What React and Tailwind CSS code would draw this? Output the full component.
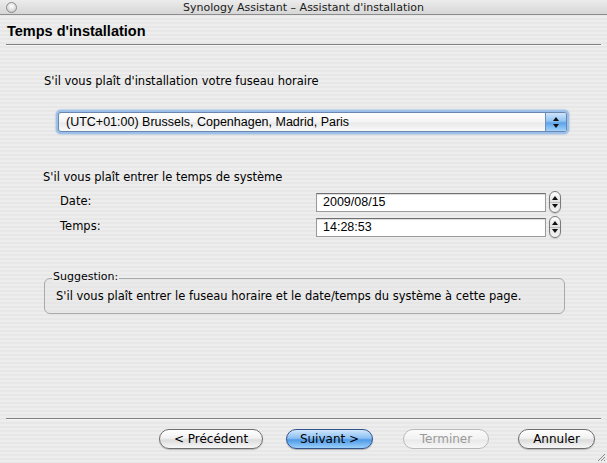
import React from "react";

const lucida = "font-['DejaVu_Sans','Noto_Sans',sans-serif]";
const helv = "font-['Liberation_Sans','Arial',sans-serif]";

function Stepper() {
  return (
    <div className="w-[12px] h-[22px] rounded-[6px] border border-[#7a7a7a] bg-[linear-gradient(to_bottom,#ffffff,#e2e2e2_50%,#f4f4f4)] flex flex-col items-center justify-between py-[4px] shadow-[0_1px_1px_rgba(0,0,0,0.15)]">
      <svg width="6" height="4" viewBox="0 0 6 4">
        <path d="M3 0 L6 4 L0 4 Z" fill="#111" />
      </svg>
      <div className="w-full h-px bg-[#bdbdbd]" />
      <svg width="6" height="4" viewBox="0 0 6 4">
        <path d="M0 0 L6 0 L3 4 Z" fill="#111" />
      </svg>
    </div>
  );
}

function Field({ label, value }) {
  return (
    <div className="flex items-center h-[22px]">
      <div className={`${lucida} text-[11.5px] text-black w-[273px] pl-[17px]`}>{label}</div>
      <div className={`${helv} w-[230px] h-[19px] bg-white border border-[#9a9a9a] border-t-[#6f6f6f] shadow-[inset_0_1px_1px_rgba(0,0,0,0.15)] text-[12.5px] leading-[17px] pl-[6px] text-black`}>
        {value}
      </div>
      <div className="ml-[3px]">
        <Stepper />
      </div>
    </div>
  );
}

function AquaButton({ children, width, variant = "normal" }) {
  const base = `${lucida} h-[20px] rounded-full text-[12px] leading-[18px] flex items-center justify-center`;
  const styles = {
    normal:
      "border border-[#6d6d6d] bg-[linear-gradient(to_bottom,#ffffff,#f1f1f1_45%,#dcdcdc_55%,#f7f7f7)] text-black shadow-[0_1px_1px_rgba(0,0,0,0.2)]",
    primary:
      "border border-[#33548a] bg-[linear-gradient(to_bottom,#cfe6fc,#8cc0f2_45%,#4f9ae6_55%,#9ad0fb)] text-black shadow-[0_1px_1px_rgba(0,0,0,0.25)]",
    disabled:
      "border border-[#b9b9b9] bg-[linear-gradient(to_bottom,#fbfbfb,#f2f2f2_50%,#e9e9e9_55%,#f7f7f7)] text-[#9a9a9a]",
  };
  return (
    <div className={`${base} ${styles[variant]}`} style={{ width }}>
      {children}
    </div>
  );
}

export default function App() {
  return (
    <div className="w-[607px] h-[463px] overflow-hidden flex flex-col bg-[repeating-linear-gradient(to_bottom,#ededed_0px,#ededed_2px,#e7e7e7_2px,#e7e7e7_4px)] text-black">
      {/* title bar */}
      <div className="h-[15px] relative flex items-center justify-center border-b border-[#8c8c8c] bg-[linear-gradient(to_bottom,#ececec,#d6d6d6)]">
        <div className="absolute left-[6px] top-[2px] w-[11px] h-[11px] rounded-full border border-[#8a8a8a] bg-[radial-gradient(circle_at_50%_35%,#ffffff,#d4d4d4_70%,#bcbcbc)]" />
        <div className={`${lucida} text-[11px] leading-[13px] text-[#1a1a1a]`}>
          Synology Assistant – Assistant d'installation
        </div>
      </div>

      {/* header */}
      <div className={`${helv} h-[29px] pt-[8px] pl-[7px] text-[14.5px] font-bold leading-[17px]`}>
        Temps d'installation
      </div>
      <div className="mx-[6px] h-[2px] border-t border-[#808080] border-b border-b-[#f8f8f8]" />

      {/* timezone */}
      <div className={`${lucida} mt-[28px] pl-[44px] text-[11.5px] leading-[15px]`}>
        S'il vous plaît d'installation votre fuseau horaire
      </div>
      <div className="mt-[21px] ml-[56px] w-[513px] h-[24px] rounded-[5px] p-[2px] bg-[#9cc0ea] shadow-[0_0_2px_#6f9fd8]">
        <div className="h-full rounded-[3px] border border-[#6c87ad] bg-[linear-gradient(to_bottom,#ffffff,#f4f4f4_50%,#e9e9e9_55%,#fafafa)] flex">
          <div className={`${helv} flex-1 text-[12.5px] leading-[18px] pl-[7px]`}>
            (UTC+01:00) Brussels, Copenhagen, Madrid, Paris
          </div>
          <div className="w-[21px] rounded-r-[2px] border-l border-[#6f8fbd] bg-[linear-gradient(to_bottom,#cfe5fb,#93c3f1_45%,#5ea3ea_55%,#a2d3fb)] flex flex-col items-center justify-center gap-[3px]">
            <svg width="6" height="4" viewBox="0 0 6 4">
              <path d="M3 0 L6 4 L0 4 Z" fill="#111" />
            </svg>
            <svg width="6" height="4" viewBox="0 0 6 4">
              <path d="M0 0 L6 0 L3 4 Z" fill="#111" />
            </svg>
          </div>
        </div>
      </div>

      {/* system time */}
      <div className={`${lucida} mt-[36px] pl-[43px] text-[11.5px] leading-[15px]`}>
        S'il vous plaît entrer le temps de système
      </div>
      <div className="mt-[6px] ml-[43px] flex flex-col gap-[3px]">
        <Field label="Date:" value="2009/08/15" />
        <Field label="Temps:" value="14:28:53" />
      </div>

      {/* suggestion */}
      <div className="mt-[40px] ml-[44px] w-[521px] relative">
        <div className={`${lucida} absolute left-[8px] -top-[8px] px-[1px] text-[11px] leading-[13px] bg-[#ebebeb]`}>
          Suggestion:
        </div>
        <div className="h-[36px] rounded-[6px] border border-[#a9a9a9] bg-[#e6e6e6]/40 flex items-center pl-[11px]">
          <div className={`${lucida} text-[11.5px] leading-[15px] pt-[1px]`}>
            S'il vous plaît entrer le fuseau horaire et le date/temps du système à cette page.
          </div>
        </div>
      </div>

      {/* footer */}
      <div className="mt-auto">
        <div className="mx-[6px] h-[2px] border-t border-[#808080] border-b border-b-[#f8f8f8]" />
        <div className="relative h-[43px] pt-[9px] flex items-start pl-[159px]">
          <AquaButton width={104}>&lt; Précédent</AquaButton>
          <div className="ml-[23px]">
            <AquaButton width={87} variant="primary">Suivant &gt;</AquaButton>
          </div>
          <div className="ml-[30px]">
            <AquaButton width={86} variant="disabled">Terminer</AquaButton>
          </div>
          <div className="ml-[29px]">
            <AquaButton width={77}>Annuler</AquaButton>
          </div>
          <svg className="absolute right-[1px] bottom-[1px]" width="10" height="10" viewBox="0 0 10 10">
            <path d="M9 2 L2 9 M9 5 L5 9 M9 8 L8 9" stroke="#8c8c8c" strokeWidth="1" />
          </svg>
        </div>
      </div>
    </div>
  );
}
